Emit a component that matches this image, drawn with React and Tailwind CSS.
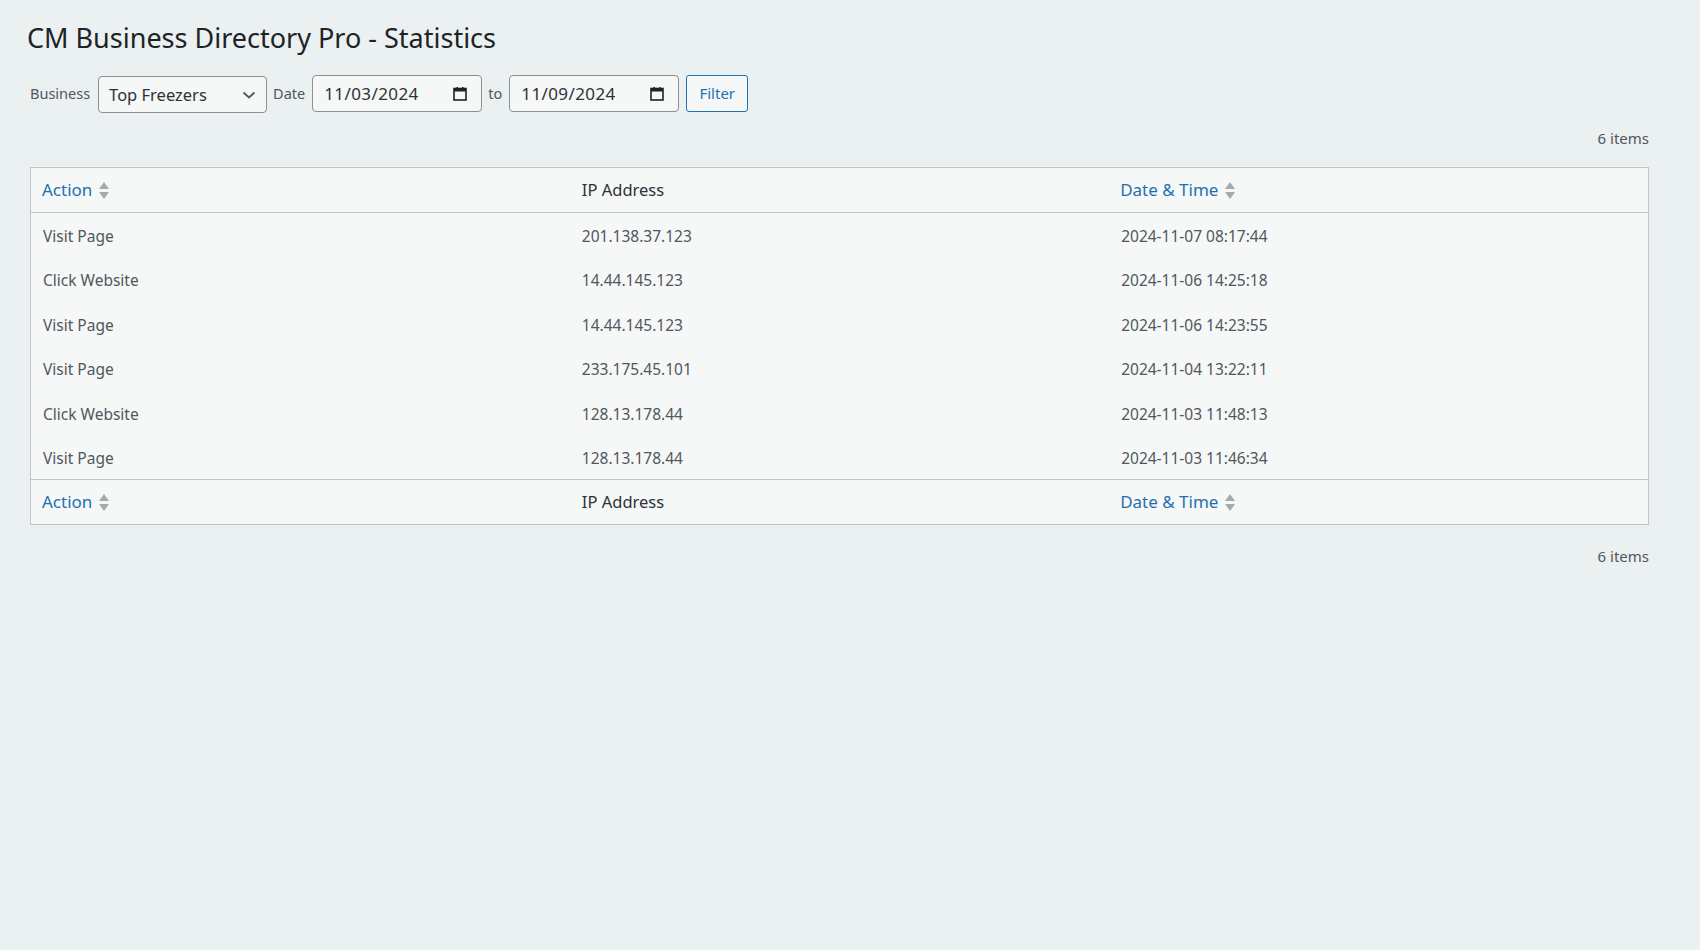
import React from 'react';

const rows = [
  { action: 'Visit Page', ip: '201.138.37.123', date: '2024-11-07 08:17:44' },
  { action: 'Click Website', ip: '14.44.145.123', date: '2024-11-06 14:25:18' },
  { action: 'Visit Page', ip: '14.44.145.123', date: '2024-11-06 14:23:55' },
  { action: 'Visit Page', ip: '233.175.45.101', date: '2024-11-04 13:22:11' },
  { action: 'Click Website', ip: '128.13.178.44', date: '2024-11-03 11:48:13' },
  { action: 'Visit Page', ip: '128.13.178.44', date: '2024-11-03 11:46:34' },
];

const SortArrows = () => (
  <svg width="10" height="17" viewBox="0 0 10 17" className="ml-[7px] shrink-0">
    <path d="M5 0 L10 7 L0 7 Z" fill="#a7aaad" />
    <path d="M0 10 L10 10 L5 17 Z" fill="#a7aaad" />
  </svg>
);

const CalendarIcon = () => (
  <svg width="14" height="14" viewBox="0 0 14 14">
    <rect x="1" y="1.5" width="12" height="11.5" fill="none" stroke="#1d2327" strokeWidth="1.6" />
    <rect x="1" y="1.5" width="12" height="3" fill="#1d2327" />
    <rect x="3.5" y="0" width="1.5" height="2" fill="#1d2327" />
    <rect x="9" y="0" width="1.5" height="2" fill="#1d2327" />
  </svg>
);

const DateBox = ({ value }) => (
  <div className="flex items-center justify-between w-[170px] h-[37px] pl-[11px] pr-[14px] bg-[#f6f7f7] border border-[#8c8f94] rounded-[4px] text-[17px] text-[#2c3338] tracking-[0.4px]">
    <span>{value}</span>
    <CalendarIcon />
  </div>
);

const HeaderRow = () => (
  <tr className="h-[45px]">
    <th className="text-left font-normal pl-[11px] pr-3">
      <a className="inline-flex items-center text-[#2271b1] text-[17px]">Action<SortArrows /></a>
    </th>
    <th className="text-left font-normal px-3 text-[16.5px] text-[#2c3338]">IP Address</th>
    <th className="text-left font-normal pl-[11px] pr-3">
      <a className="inline-flex items-center text-[#2271b1] text-[17px]">Date &amp; Time<SortArrows /></a>
    </th>
  </tr>
);

export default function App() {
  return (
    <div
      className="min-h-[950px] bg-[#ebf0f0] pl-[30px] pr-[51px] pt-[20px]"
      style={{ fontFamily: '"Noto Sans", "Open Sans", sans-serif' }}
    >
      <h1 className="text-[27px] leading-[35px] text-[#1d2327] -ml-[3px]">CM Business Directory Pro - Statistics</h1>

      <div className="flex items-center mt-[19px] h-[39px] text-[14.5px] text-[#50575e]">
        <span>Business</span>
        <div className="ml-[8px] mt-[2px] flex items-center justify-between w-[169px] h-[37px] pl-[10px] pr-[10px] bg-[#f6f7f7] border border-[#8c8f94] rounded-[4px] text-[16.5px] text-[#2c3338]">
          <span className="pt-[2px]">Top Freezers</span>
          <svg width="14" height="8" viewBox="0 0 14 8">
            <path d="M1.5 1.5 L7 6.5 L12.5 1.5" fill="none" stroke="#50575e" strokeWidth="1.8" />
          </svg>
        </div>
        <span className="ml-[6px] mr-[7px]">Date</span>
        <DateBox value="11/03/2024" />
        <span className="ml-[6px] mr-[7px]">to</span>
        <DateBox value="11/09/2024" />
        <button className="ml-[7px] h-[37px] w-[62px] border border-[#2271b1] rounded-[3px] bg-[#f6f7f7] text-[#2271b1] text-[15px]">Filter</button>
      </div>

      <div className="flex justify-end mt-[15px] h-[20px] text-[15px] leading-[20px] text-[#50575e]">6 items</div>

      <table className="w-full table-fixed border-collapse border border-[#c3c4c7] bg-[#f6f7f7] mt-[19px]">
        <thead className="border-b border-[#c3c4c7]">
          <HeaderRow />
        </thead>
        <tbody>
          {rows.map((r, i) => (
            <tr key={i} className="h-[44.5px] text-[15.5px] text-[#50575e]">
              <td className="px-3 pt-[3px]">{r.action}</td>
              <td className="px-3 pt-[3px]">{r.ip}</td>
              <td className="px-3 pt-[3px]">{r.date}</td>
            </tr>
          ))}
        </tbody>
        <tfoot className="border-t border-[#c3c4c7]">
          <HeaderRow />
        </tfoot>
      </table>

      <div className="flex justify-end mt-[21px] h-[20px] text-[15px] leading-[20px] text-[#50575e]">6 items</div>
    </div>
  );
}
